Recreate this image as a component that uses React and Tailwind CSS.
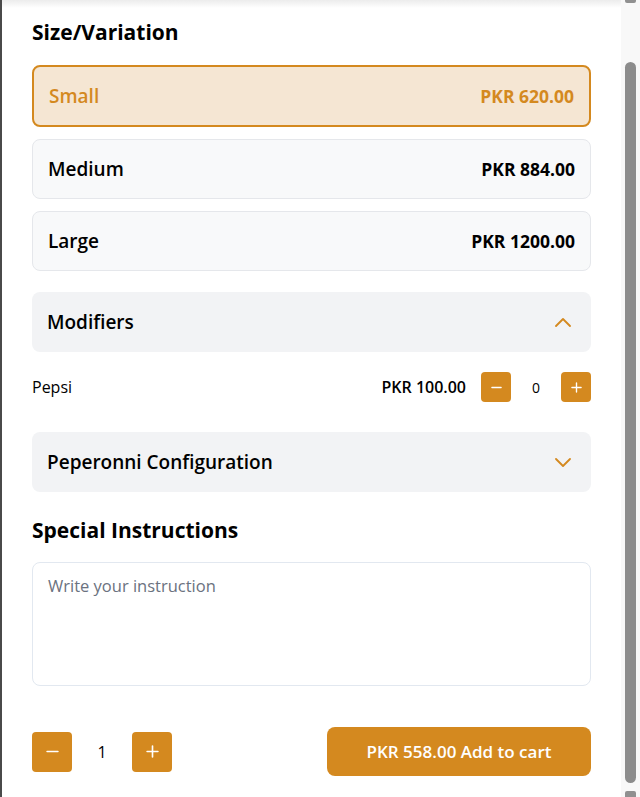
import React from "react";

const Minus = ({ s = 12 }) => (
  <svg width={s} height={s} viewBox="0 0 12 12" fill="none" stroke="white" strokeWidth="1.5" strokeLinecap="round">
    <line x1="1" y1="6" x2="11" y2="6" />
  </svg>
);
const Plus = ({ s = 12 }) => (
  <svg width={s} height={s} viewBox="0 0 12 12" fill="none" stroke="white" strokeWidth="1.5" strokeLinecap="round">
    <line x1="1" y1="6" x2="11" y2="6" />
    <line x1="6" y1="1" x2="6" y2="11" />
  </svg>
);
const Chevron = ({ up }) => (
  <svg width="16" height="9" viewBox="0 0 16 9" fill="none" stroke="#d4891f" strokeWidth="1.8" strokeLinecap="round" strokeLinejoin="round">
    {up ? <polyline points="1,8 8,1 15,8" /> : <polyline points="1,1 8,8 15,1" />}
  </svg>
);

export default function App() {
  return (
    <div className="flex h-[797px] w-[640px] overflow-hidden bg-white text-black" style={{ fontFamily: '"Open Sans", "Noto Sans", sans-serif' }}>
      <div className="w-[2px] shrink-0 bg-[#4a4a4a]" />
      <div className="flex-1 flex flex-col">
        <div className="h-[8px] bg-gradient-to-b from-[#ececec] to-white" />
        <div className="flex flex-col px-[30px]">
          <h2 className="mt-[10px] text-[21px] leading-[28px] font-bold">Size/Variation</h2>
          <div className="mt-[19px] flex flex-col gap-[12px]">
            <div className="h-[62px] flex items-center justify-between rounded-[8px] border-2 border-[#d4891f] bg-[#f5e6d3] px-[15px] pt-[1px]">
              <span className="text-[19px] font-semibold text-[#d4891f]">Small</span>
              <span className="text-[17.5px] font-bold text-[#d4891f]">PKR 620.00</span>
            </div>
            <div className="h-[60px] flex items-center justify-between rounded-[8px] border border-[#e5e7eb] bg-[#f8f9fa] px-[15px] pt-[1px]">
              <span className="text-[19px] font-semibold">Medium</span>
              <span className="text-[17.5px] font-bold">PKR 884.00</span>
            </div>
            <div className="h-[60px] flex items-center justify-between rounded-[8px] border border-[#e5e7eb] bg-[#f8f9fa] px-[15px] pt-[1px]">
              <span className="text-[19px] font-semibold">Large</span>
              <span className="text-[17.5px] font-bold">PKR 1200.00</span>
            </div>
          </div>
          <div className="mt-[21px] h-[60px] flex items-center justify-between rounded-[8px] bg-[#f2f3f5] pl-[15px] pr-[20px] pt-[1px]">
            <span className="text-[19px] font-semibold">Modifiers</span>
            <Chevron up />
          </div>
          <div className="mt-[20px] flex items-center justify-between">
            <span className="text-[16px]">Pepsi</span>
            <div className="flex items-center">
              <span className="text-[16px] font-semibold">PKR 100.00</span>
              <button className="ml-[15px] flex h-[30px] w-[30px] items-center justify-center rounded-[4px] bg-[#d4891f]"><Minus s={11} /></button>
              <span className="w-[50px] text-center text-[14px]">0</span>
              <button className="flex h-[30px] w-[30px] items-center justify-center rounded-[4px] bg-[#d4891f]"><Plus s={11} /></button>
            </div>
          </div>
          <div className="mt-[30px] h-[60px] flex items-center justify-between rounded-[8px] bg-[#f2f3f5] pl-[15px] pr-[20px] pt-[1px]">
            <span className="text-[19px] font-semibold">Peperonni Configuration</span>
            <Chevron />
          </div>
          <h2 className="mt-[24px] text-[21px] leading-[28px] font-bold">Special Instructions</h2>
          <textarea
            className="mt-[18px] h-[124px] resize-none rounded-[8px] border border-[#e2e8f0] px-[15px] py-[11px] text-[16.5px] placeholder:text-[#6b7280] outline-none"
            placeholder="Write your instruction"
          />
          <div className="mt-[41px] flex items-center justify-between">
            <div className="flex items-center">
              <button className="flex h-[40px] w-[40px] items-center justify-center rounded-[4px] bg-[#d4891f]"><Minus s={13} /></button>
              <span className="w-[60px] text-center text-[16px] font-medium">1</span>
              <button className="flex h-[40px] w-[40px] items-center justify-center rounded-[4px] bg-[#d4891f]"><Plus s={13} /></button>
            </div>
            <button className="h-[49px] w-[264px] rounded-[8px] bg-[#d4891f] text-[17px] font-semibold text-white">PKR 558.00 Add to cart</button>
          </div>
        </div>
      </div>
      <div className="relative w-[19px] shrink-0 bg-[#f8f8f8] flex flex-col items-center">
        <div className="mt-0 h-[3px] w-[11px] rounded-b-[2px] bg-[#909090]" />
        <div className="mt-[59px] h-[721px] w-[11px] rounded-full bg-[#8c8c8c]" />
        <div className="mt-[8px] h-[6px] w-[11px] rounded-t-[2px] bg-[#909090]" />
      </div>
    </div>
  );
}
